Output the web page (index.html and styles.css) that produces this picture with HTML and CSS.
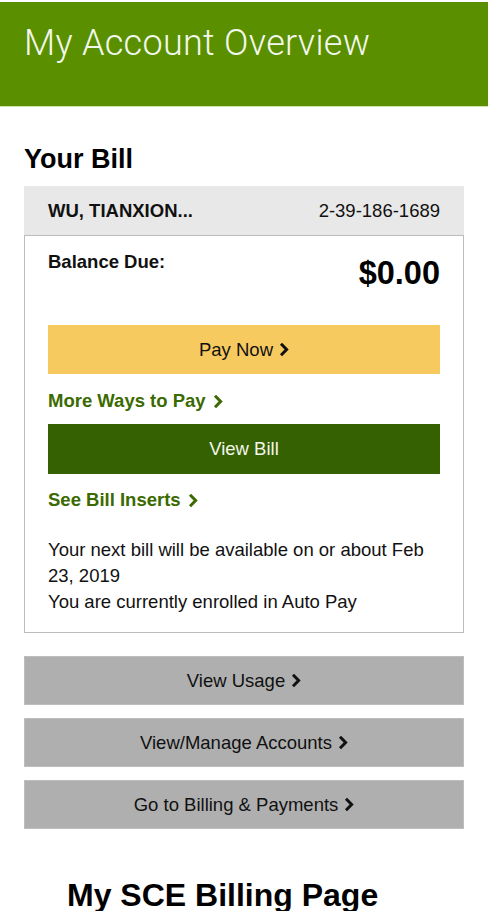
FILE: index.html
```html
<!DOCTYPE html>
<html lang="en">
<head>
<meta charset="utf-8">
<title>My Account Overview</title>
<link rel="stylesheet" href="styles.css">
</head>
<body>
<header class="top-bar">
  <h1 class="top-title">My Account Overview</h1>
</header>
<main class="content">
  <h2 class="section-title">Your Bill</h2>
  <section class="bill-card">
    <div class="bill-head">
      <span class="acct-name">WU, TIANXION...</span>
      <span class="acct-num">2-39-186-1689</span>
    </div>
    <div class="bill-body">
      <div class="balance-row">
        <span class="balance-label">Balance Due:</span>
        <span class="balance-amount">$0.00</span>
      </div>
      <a class="btn btn-pay" href="#">Pay Now <svg class="chev" viewBox="0 0 10 15" width="10" height="15"><path d="M2 1.8 L7.6 7.5 L2 13.2" fill="none" stroke="currentColor" stroke-width="3"/></svg></a>
      <a class="link" href="#">More Ways to Pay <svg class="chev" viewBox="0 0 10 15" width="10" height="15"><path d="M2 1.8 L7.6 7.5 L2 13.2" fill="none" stroke="currentColor" stroke-width="3"/></svg></a>
      <a class="btn btn-view" href="#">View Bill</a>
      <a class="link link-inserts" href="#">See Bill Inserts <svg class="chev" viewBox="0 0 10 15" width="10" height="15"><path d="M2 1.8 L7.6 7.5 L2 13.2" fill="none" stroke="currentColor" stroke-width="3"/></svg></a>
      <p class="bill-note">Your next bill will be available on or about Feb 23, 2019<br>You are currently enrolled in Auto Pay</p>
    </div>
  </section>
  <nav class="actions">
    <a class="btn btn-gray" href="#">View Usage <svg class="chev" viewBox="0 0 10 15" width="10" height="15"><path d="M2 1.8 L7.6 7.5 L2 13.2" fill="none" stroke="currentColor" stroke-width="3"/></svg></a>
    <a class="btn btn-gray" href="#">View/Manage Accounts <svg class="chev" viewBox="0 0 10 15" width="10" height="15"><path d="M2 1.8 L7.6 7.5 L2 13.2" fill="none" stroke="currentColor" stroke-width="3"/></svg></a>
    <a class="btn btn-gray" href="#">Go to Billing &amp; Payments <svg class="chev" viewBox="0 0 10 15" width="10" height="15"><path d="M2 1.8 L7.6 7.5 L2 13.2" fill="none" stroke="currentColor" stroke-width="3"/></svg></a>
  </nav>
</main>
<div class="caption">My SCE Billing Page</div>
</body>
</html>
```
FILE: styles.css
```css
* { box-sizing: border-box; }
html, body { margin: 0; padding: 0; background: #fff; }
body {
  font-family: "Liberation Sans", Arial, sans-serif;
  color: #111;
  width: 490px;
}
.top-bar {
  margin-top: 2px;
  width: 488px;
  height: 105px;
  background: #5a8f00;
  padding: 21px 24px 0;
  border-bottom: 1px solid #cfe3b0;
}
.top-title {
  margin: 0;
  font-family: Roboto, "Liberation Sans", sans-serif;
  font-weight: 300;
  font-size: 36px;
  letter-spacing: 0.3px;
  line-height: 40px;
  color: #f3f8ec;
}
.content {
  padding: 0 26px 0 24px;
}
.section-title {
  margin: 36px 0 11px;
  font-size: 27px;
  line-height: 32px;
  font-weight: bold;
  color: #000;
}
.bill-card { display: flex; flex-direction: column; }
.bill-head {
  height: 49px;
  background: #e8e8e8;
  display: flex;
  align-items: center;
  justify-content: space-between;
  padding: 0 24px;
  font-size: 18.5px;
}
.acct-name { font-weight: bold; color: #111; }
.acct-num { color: #111; }
.bill-body {
  border: 1px solid #bcbcbc;
  padding: 15px 23px 17px;
  display: flex;
  flex-direction: column;
}
.balance-row {
  display: flex;
  justify-content: space-between;
  align-items: flex-start;
}
.balance-label {
  font-weight: bold;
  font-size: 18.5px;
  line-height: 22px;
}
.balance-amount {
  font-weight: bold;
  font-size: 32.5px;
  line-height: 36px;
  margin-top: 4px;
  color: #000;
}
.btn {
  display: flex;
  align-items: center;
  justify-content: center;
  gap: 6px;
  height: 49px;
  font-size: 18.5px;
  text-decoration: none;
  color: #111;
}
.chev { display: block; flex: none; }
.btn-pay {
  margin-top: 34px;
  background: #f7ca5f;
}
.btn-view {
  margin-top: 12px;
  height: 50px;
  background: #366102;
  color: #f2f6ec;
}
.link {
  display: flex;
  align-items: center;
  gap: 7px;
  font-size: 18.5px;
  line-height: 22px;
  font-weight: bold;
  color: #3b6a00;
  text-decoration: none;
  margin-top: 16px;
}
.link-inserts { margin-top: 15px; }
.bill-note {
  margin: 26px 0 0;
  font-size: 18.5px;
  line-height: 26px;
  color: #111;
}
.actions {
  margin-top: 23px;
  display: flex;
  flex-direction: column;
  gap: 13px;
}
.btn-gray {
  background: #afafaf;
  border: 1px solid #bdbdbd;
}
.caption {
  margin: 50px 0 0 67px;
  font-size: 32px;
  line-height: 32px;
  font-weight: bold;
  color: #000;
}
```
